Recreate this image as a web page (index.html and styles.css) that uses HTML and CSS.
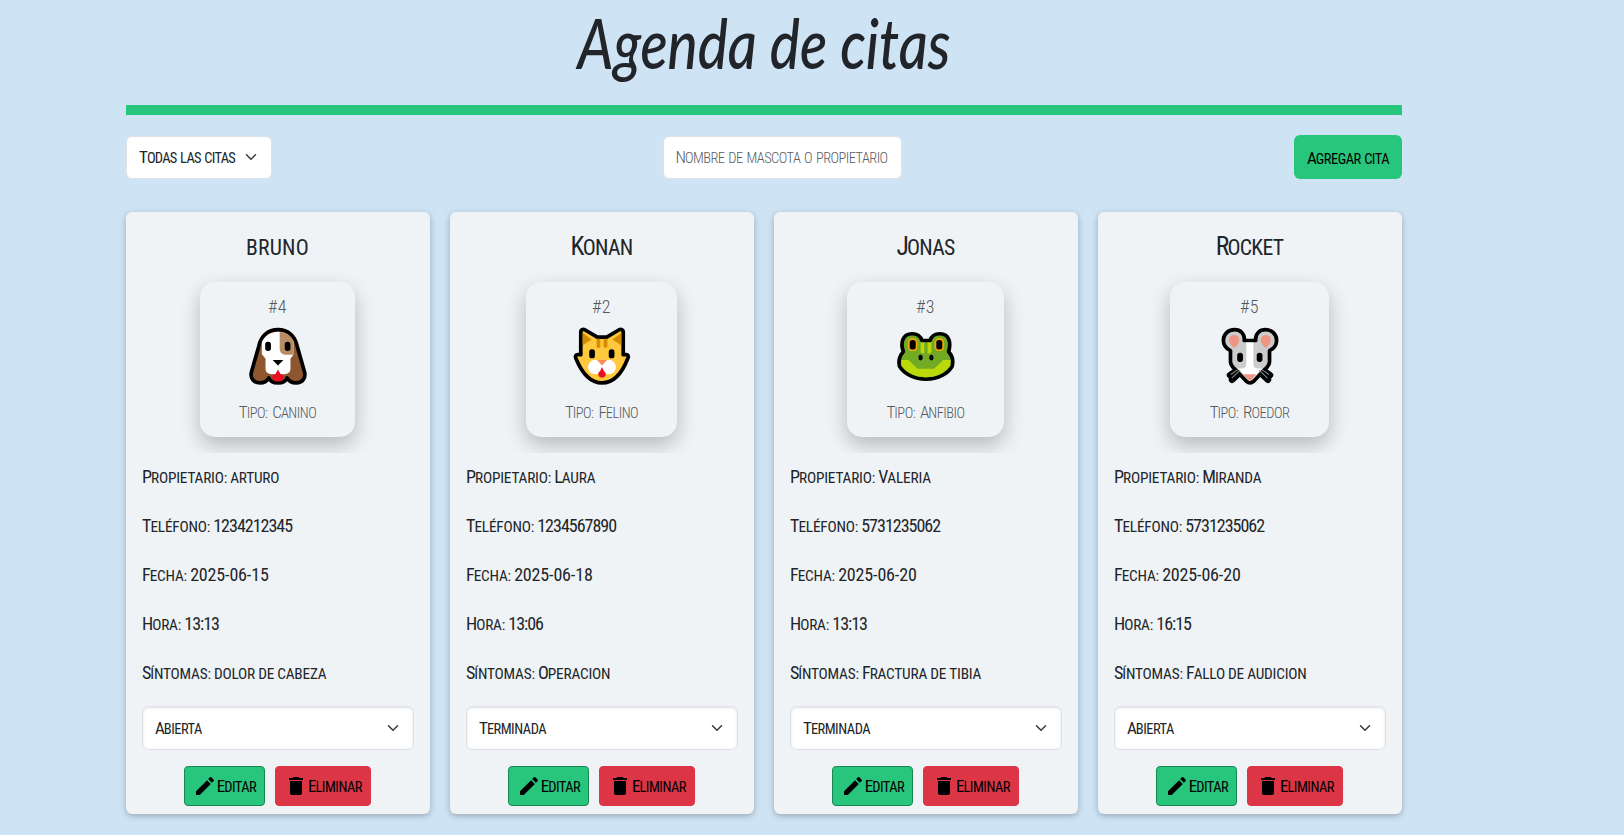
FILE: index.html
```html
<!DOCTYPE html>
<html lang="es">
<head>
<meta charset="utf-8">
<title>Agenda de citas</title>
<link rel="stylesheet" href="styles.css">
</head>
<body>
<svg class="defs" aria-hidden="true">
  <symbol id="chevron" viewBox="0 0 16 16"><path d="m2 5 6 6 6-6" fill="none" stroke="#343a40" stroke-width="2" stroke-linecap="round" stroke-linejoin="round"/></symbol>
  <symbol id="pencil" viewBox="0 0 24 24"><path d="M3 17.25V21h3.75L17.81 9.94l-3.75-3.75zM20.71 7.04a1 1 0 0 0 0-1.41l-2.34-2.34a1 1 0 0 0-1.41 0l-1.83 1.83 3.75 3.75z"/></symbol>
  <symbol id="trash" viewBox="0 0 24 24"><path d="M6 19c0 1.1.9 2 2 2h8c1.100 0 2-.9 2-2V7H6zM19 4h-3.500l-1-1h-5l-1 1H5v2h14z"/></symbol>
</svg>
<main class="page">
  <header class="header"><h1 class="title">Agenda de citas</h1></header>
  <div class="filters">
    <div class="select select-filter"><span class="t"><span class="w">Todas</span> <span class="w lo">las</span> <span class="w lo">citas</span></span><svg class="chev"><use href="#chevron"/></svg></div>
    <div class="search"><span class="t"><span class="w">Nombre</span> <span class="w lo">de</span> <span class="w lo">mascota</span> <span class="w lo">o</span> <span class="w lo">propietario</span></span></div>
    <button class="add"><span class="t"><span class="w">Agregar</span> <span class="w lo">cita</span></span></button>
  </div>
  <section class="cards">
    <article class="card">
      <h2 class="name"><span class="w lo">bruno</span></h2>
      <div class="pet-area"><div class="pet pet-dog">
        <span class="num">#4</span>
        <svg class="face" viewBox="198 178 190 190">
          <path d="M293 195c-30 0-51 19-57 49l-22 77c-4 18 7 32 25 32 13 0 22-5 27-15 4 11 12 15 27 15s23-4 27-15c5 10 14 15 27 15 18 0 29-14 25-32l-22-77c-6-30-27-49-57-49z" fill="#8e562e" stroke="#000" stroke-width="11" stroke-linejoin="round"/>
          <path d="M293 201c-21 0-37 10-48 30v37l11 13v30c0 10 8 16 18 16h38c10 0 18-6 18-16v-30l10-14v-36c-10-20-26-30-47-30z" fill="#fff"/>
          <path d="M298 201c19 1 33 11 42 30v38h-26c-10 0-16-8-16-18z" fill="#b78d65"/>
          <rect x="255" y="231" width="17" height="27" rx="8"/><rect x="313" y="231" width="17" height="27" rx="8"/>
          <path d="M277 285h32l-16 16z"/><path d="m293 313 8 14c7 1 9 4 9 8 0 8-7 14-17 14s-17-6-17-14c0-4 2-7 9-8z" fill="#e81123"/>
        </svg>
        <span class="kind"><span class="w">Tipo:</span> <span class="w">Canino</span></span>
      </div></div>
      <p class="row"><span class="w">Propietario:</span> <span class="w lo">arturo</span></p>
      <p class="row"><span class="w">Teléfono:</span> <span class="n">1234212345</span></p>
      <p class="row"><span class="w">Fecha:</span> <span class="n date">2025-06-15</span></p>
      <p class="row"><span class="w">Hora:</span> <span class="n">13:13</span></p>
      <p class="row"><span class="w">Síntomas:</span> <span class="w lo">dolor</span> <span class="w lo">de</span> <span class="w lo">cabeza</span></p>
      <div class="select select-state"><span class="t"><span class="w">Abierta</span></span><svg class="chev"><use href="#chevron"/></svg></div>
      <div class="actions"><button class="btn edit"><svg class="ico"><use href="#pencil"/></svg><span class="w">Editar</span></button><button class="btn delete"><svg class="ico"><use href="#trash"/></svg><span class="w">Eliminar</span></button></div>
    </article>
    <article class="card">
      <h2 class="name"><span class="w">Konan</span></h2>
      <div class="pet-area"><div class="pet pet-cat">
        <span class="num">#2</span>
        <svg class="face" viewBox="195 178 190 190">
          <path d="M227 269v-68c0-6 6-9 12-6l37 22h28l37-22c6-3 12 0 12 6v68h9c5 0 8 5 5 10-16 42-42 74-77 74s-61-32-78-74c-2-5 0-10 6-10z" fill="#ffc83d" stroke="#000" stroke-width="11" stroke-linejoin="round"/>
          <path d="M233 205v36l26-17zM347 205v36l-26-17zM274 222h11v24q-6 5-11 0zM295 222h11v24q-6 5-11 0z" fill="#d48c00"/>
          <rect x="252" y="253" width="17" height="27" rx="8"/><rect x="310" y="253" width="17" height="27" rx="8"/>
          <circle cx="270" cy="306" r="21.500" fill="#fff"/><circle cx="310" cy="306" r="21.500" fill="#fff"/>
          <path d="M275 285h30l-15 16z" fill="#ff8c55"/><path d="m290 306 6 12c4 2 5 6 5 9 0 6-5 10-11 10s-11-4-11-10c0-3 1-7 5-9z" fill="#e81123"/>
        </svg>
        <span class="kind"><span class="w">Tipo:</span> <span class="w">Felino</span></span>
      </div></div>
      <p class="row"><span class="w">Propietario:</span> <span class="w">Laura</span></p>
      <p class="row"><span class="w">Teléfono:</span> <span class="n">1234567890</span></p>
      <p class="row"><span class="w">Fecha:</span> <span class="n date">2025-06-18</span></p>
      <p class="row"><span class="w">Hora:</span> <span class="n">13:06</span></p>
      <p class="row"><span class="w">Síntomas:</span> <span class="w">Operacion</span></p>
      <div class="select select-state"><span class="t"><span class="w">Terminada</span></span><svg class="chev"><use href="#chevron"/></svg></div>
      <div class="actions"><button class="btn edit"><svg class="ico"><use href="#pencil"/></svg><span class="w">Editar</span></button><button class="btn delete"><svg class="ico"><use href="#trash"/></svg><span class="w">Eliminar</span></button></div>
    </article>
    <article class="card">
      <h2 class="name"><span class="w">Jonas</span></h2>
      <div class="pet-area"><div class="pet pet-frog">
        <span class="num">#3</span>
        <svg class="face" viewBox="192 178 190 190">
          <path d="M220 260c-9-22-5-53 26-53 16 0 25 8 29 20h24c4-12 13-20 29-20 31 0 33 31 26 53 12 13 14 30 11 43-12 22-42 39-78 39s-66-17-79-39c-3-14 1-31 12-43z" fill="#73aa24" stroke="#000" stroke-width="11" stroke-linejoin="round"/>
          <path d="M213 285h22l27 26h49l27-26h22l-1 17c-16 21-40 34-72 34s-57-13-73-34z" fill="#bad80a"/>
          <path d="M271 233h11v32h-6q-5 0-5-5zM292 233h11v27q0 5-5 5h-6z" fill="#bad80a"/>
          <rect x="236" y="223" width="23" height="33" rx="10" stroke="#f7a900" stroke-width="5"/><rect x="315" y="223" width="23" height="33" rx="10" stroke="#f7a900" stroke-width="5"/>
          <rect x="265" y="269" width="12" height="17" rx="6"/><rect x="297" y="269" width="12" height="17" rx="6"/>
        </svg>
        <span class="kind"><span class="w">Tipo:</span> <span class="w">Anfibio</span></span>
      </div></div>
      <p class="row"><span class="w">Propietario:</span> <span class="w">Valeria</span></p>
      <p class="row"><span class="w">Teléfono:</span> <span class="n">5731235062</span></p>
      <p class="row"><span class="w">Fecha:</span> <span class="n date">2025-06-20</span></p>
      <p class="row"><span class="w">Hora:</span> <span class="n">13:13</span></p>
      <p class="row"><span class="w">Síntomas:</span> <span class="w">Fractura</span> <span class="w lo">de</span> <span class="w lo">tibia</span></p>
      <div class="select select-state"><span class="t"><span class="w">Terminada</span></span><svg class="chev"><use href="#chevron"/></svg></div>
      <div class="actions"><button class="btn edit"><svg class="ico"><use href="#pencil"/></svg><span class="w">Editar</span></button><button class="btn delete"><svg class="ico"><use href="#trash"/></svg><span class="w">Eliminar</span></button></div>
    </article>
    <article class="card">
      <h2 class="name"><span class="w">Rocket</span></h2>
      <div class="pet-area"><div class="pet pet-mouse">
        <span class="num">#5</span>
        <svg class="face" viewBox="204 178 190 190">
          <path d="m246 343 36-34M240 330l36-25M352 343l-36-34M358 330l-36-25" stroke="#000" stroke-width="20" stroke-linecap="round"/>
          <path d="M282 227h34c-2-21 12-32 29-32 20 0 33 14 33 32 0 16-10 25-21 30v32c0 12-7 18-15 25l-32 34q-11 9-22 0l-32-34c-8-7-15-13-15-25v-32c-11-5-21-14-21-30 0-18 13-32 33-32 17 0 31 11 29 32z" fill="#ccc" stroke="#000" stroke-width="11" stroke-linejoin="round"/>
          <path d="M288 233h21v65c0 7 6 12 15 12h11l-37 38-35-38h10c9 0 15-5 15-12z" fill="#fff"/>
          <path d="M252 211c10 0 15 7 15 16 0 8-6 15-15 22-9-7-15-14-15-22 0-9 5-16 15-16zM346 211c10 0 15 7 15 16 0 8-6 15-15 22-9-7-15-14-15-22 0-9 5-16 15-16zM279 327h38l-15 17q-4 4-8 0z" fill="#ef9586"/>
          <rect x="261" y="263" width="17" height="28" rx="8"/><rect x="319" y="263" width="17" height="28" rx="8"/>
          <path d="m245 339 25-24M242 328l20-14M351 339l-25-24M355 328l-20-14" stroke="#888" stroke-width="3"/>
        </svg>
        <span class="kind"><span class="w">Tipo:</span> <span class="w">Roedor</span></span>
      </div></div>
      <p class="row"><span class="w">Propietario:</span> <span class="w">Miranda</span></p>
      <p class="row"><span class="w">Teléfono:</span> <span class="n">5731235062</span></p>
      <p class="row"><span class="w">Fecha:</span> <span class="n date">2025-06-20</span></p>
      <p class="row"><span class="w">Hora:</span> <span class="n">16:15</span></p>
      <p class="row"><span class="w">Síntomas:</span> <span class="w">Fallo</span> <span class="w lo">de</span> <span class="w lo">audicion</span></p>
      <div class="select select-state"><span class="t"><span class="w">Abierta</span></span><svg class="chev"><use href="#chevron"/></svg></div>
      <div class="actions"><button class="btn edit"><svg class="ico"><use href="#pencil"/></svg><span class="w">Editar</span></button><button class="btn delete"><svg class="ico"><use href="#trash"/></svg><span class="w">Eliminar</span></button></div>
    </article>
  </section>
</main>
</body>
</html>
```
FILE: styles.css
```css
* { box-sizing: border-box; }
body {
  margin: 0;
  height: 835px;
  overflow: hidden;
  background: #cee3f4;
  color: #212529;
  font-family: Roboto, "Liberation Sans", sans-serif;
  font-stretch: 75%;
  font-size: 18px;
  font-weight: 380;
}
button { font: inherit; color: #000; padding: 0; }
.defs { display: none; }
.page { width: 1276px; margin-left: 126px; }

.header {
  height: 115px;
  border-bottom: 10px solid #28c67c;
  text-align: center;
}
.title {
  margin: 0;
  font-family: Lato, sans-serif;
  font-stretch: normal;
  font-style: italic;
  font-weight: 500;
  font-size: 69px;
  line-height: 86px;
  transform: scaleX(.82);
}

/* Small capitals: each word is set in capitals with a taller initial */
.w { display: inline-block; text-transform: uppercase; font-size: .85em; letter-spacing: -.2px; }
.w::first-letter { font-size: 1.18em; letter-spacing: -1px; }
.w.lo::first-letter { font-size: 1em; letter-spacing: inherit; }
.n { letter-spacing: -1px; }
.n.date { letter-spacing: -.15px; }
.t, .kind, .btn { font-size: 17px; white-space: nowrap; word-spacing: 1px; }
.t .w, .kind .w, .btn .w { letter-spacing: -.5px; }

.filters {
  display: flex;
  justify-content: space-between;
  align-items: center;
  margin-top: 20px;
  height: 44px;
}
.select, .search {
  display: flex;
  align-items: center;
  background: #fff;
  border: 1px solid #dee2e6;
  border-radius: 6px;
  padding: 0 12px;
}
.select { justify-content: space-between; }
.select-filter { width: 146px; height: 43px; }
.select-filter .t { word-spacing: -.5px; }
.select-filter .w { letter-spacing: -.7px; }
.select-filter .chev { margin-right: 2px; }
.search { width: 239px; height: 43px; margin-right: 2px; color: #595c5f; font-weight: 350; }
.search .t { word-spacing: 0; }
.search .w { letter-spacing: -.55px; }
.add {
  width: 108px;
  height: 44px;
  border: 0;
  border-radius: 6px;
  background: #28c67c;
}
.add .t { word-spacing: -.5px; }
.chev { width: 12px; height: 12px; }

.cards {
  display: grid;
  grid-template-columns: repeat(4, 1fr);
  gap: 20px;
  margin-top: 33px;
}
.card {
  height: 602px;
  padding: 0 16px;
  border-radius: 6px;
  background: #eff3f6;
  box-shadow: 0 2px 6px rgba(0, 0, 0, .25);
}
.name {
  margin: 0;
  height: 54px;
  padding: 17px 1px 0 0;
  text-align: center;
  font-size: 25.500px;
  font-weight: 450;
  line-height: 34px;
}
.name .w { letter-spacing: -.7px; }
.name .w.lo { letter-spacing: .2px; }
.name .w::first-letter { letter-spacing: -1.800px; }
.name .w.lo::first-letter { letter-spacing: inherit; }
.pet-area {
  display: flex;
  justify-content: center;
  height: 187px;
  padding: 16px 1px 0 0;
  overflow: hidden;
}
.pet {
  display: flex;
  flex-direction: column;
  align-items: center;
  height: 155px;
  padding: 12px 0;
  border-radius: 15px;
  box-shadow: 0 8px 20px rgba(0, 0, 0, .24);
  color: #55595d;
  font-weight: 350;
}
.pet-dog { width: 155px; }
.pet-cat { width: 151px; }
.pet-frog { width: 157px; }
.pet-mouse { width: 159px; }
.num { height: 26px; line-height: 26px; letter-spacing: .5px; }
.face { width: 64px; height: 64px; flex: none; margin: 4px 0 11px; }
.kind { height: 26px; line-height: 26px; }
.row { height: 27px; margin: 0 0 22px; line-height: 26px; white-space: nowrap; word-spacing: -1px; }
.pet-area + .row { margin-top: 11px; }

.select-state {
  height: 44px;
  margin-top: -3px;
  box-shadow: inset 0 1px 3px rgba(0, 0, 0, .12);
}
.select-state .chev { margin-right: 2px; }
.actions { display: flex; justify-content: center; gap: 10px; margin-top: 16px; padding-right: 1px; }
.btn {
  display: flex;
  align-items: center;
  justify-content: center;
  height: 40px;
  border-radius: 4px;
  border: 1px solid;
}
.edit { width: 81px; background: #28c67c; border-color: #198754; }
.delete { width: 96px; background: #dc3545; border-color: #dc3545; }
.ico { width: 24px; height: 24px; }
```
